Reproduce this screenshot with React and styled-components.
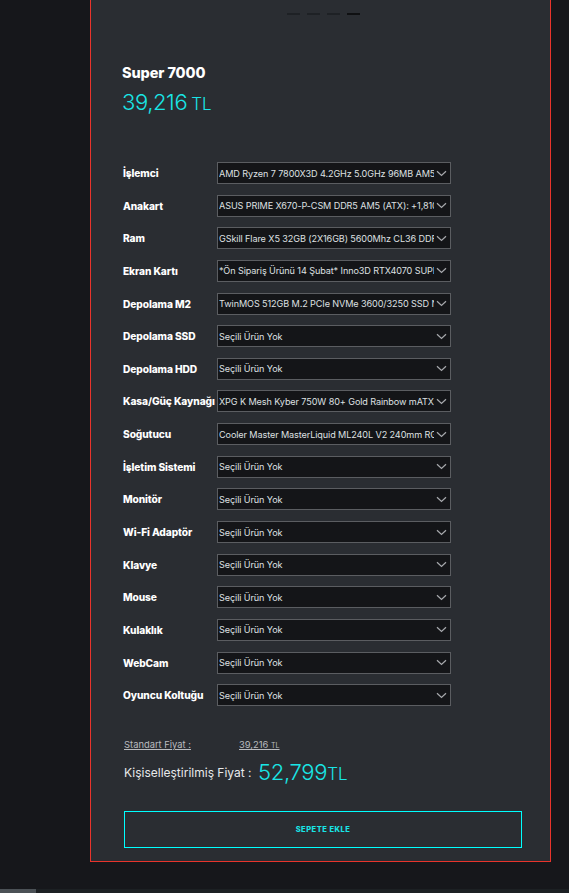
import React from 'react';
import styled, { createGlobalStyle } from 'styled-components';

const cyan = '#19e6e6';

const GlobalStyle = createGlobalStyle`
  html, body {
    margin: 0;
    padding: 0;
    background: #16171b;
  }
  body {
    font-family: Inter, 'Noto Sans', sans-serif;
    color: #fff;
  }
  * { box-sizing: border-box; }
`;

const Page = styled.div`
  width: 569px;
  height: 893px;
  overflow: hidden;
  display: flex;
  flex-direction: column;
`;

const Main = styled.div`
  padding-left: 90px;
  flex: 1;
`;

const Card = styled.div`
  width: 461px;
  background: #2a2d32;
  border: 1px solid #e8342c;
  border-top: 0;
  padding: 13px 28px 13px 31px;
`;

const Dots = styled.div`
  display: flex;
  justify-content: center;
  gap: 7px;
  margin-left: 3px;
`;

const Dot = styled.span`
  width: 13px;
  height: 2px;
  background: ${p => (p.$active ? '#0f1012' : '#1e2125')};
`;

const Title = styled.h2`
  margin: 48px 0 0;
  font-size: 14.5px;
  font-weight: 800;
  line-height: 20px;
  letter-spacing: -0.1px;
`;

const Price = styled.div`
  margin-top: 6px;
  color: ${cyan};
  font-size: 22px;
  font-weight: 300;
  line-height: 26px;
  letter-spacing: -0.4px;

  small {
    font-size: 17px;
    margin-left: 4px;
    letter-spacing: 0;
  }
`;

const Parts = styled.div`
  margin-top: 45px;
  display: grid;
  grid-template-columns: 95px 234px;
  row-gap: 10.65px;
`;

const Label = styled.div`
  font-size: 10.2px;
  font-weight: 800;
  line-height: 22px;
  white-space: nowrap;
  letter-spacing: -0.1px;
  margin-left: 1px;
`;

const SelectBox = styled.div`
  height: 22px;
  display: flex;
  align-items: center;
  background: #141518;
  border: 1px solid #5b5d61;
  padding: 0 3px 0 1px;
  gap: 2px;
`;

const SelectText = styled.span`
  flex: 1;
  overflow: hidden;
  white-space: nowrap;
  font-size: 9.1px;
  color: #dfe0e2;
  letter-spacing: -0.1px;
`;

const Chevron = () => (
  <svg width="11" height="7" viewBox="0 0 11 7" fill="none">
    <path d="M1 1.2 L5.5 5.5 L10 1.2" stroke="#a7a9ad" strokeWidth="1.2" />
  </svg>
);

const Totals = styled.div`
  margin-top: 33px;
  padding-left: 2px;
`;

const StandardRow = styled.div`
  display: flex;
  font-size: 9.4px;
  color: #b9bbbf;

  span {
    text-decoration: underline;
  }
  span:first-child {
    width: 115px;
  }
  small {
    font-size: 7px;
  }
`;

const CustomRow = styled.div`
  margin-top: 9px;
  display: flex;
  align-items: center;
  font-size: 12px;
  color: #e8e9ea;

  span:first-child {
    width: 134px;
  }
`;

const BigPrice = styled.span`
  color: ${cyan};
  font-size: 22px;
  font-weight: 300;
  letter-spacing: -0.3px;

  small {
    font-size: 17px;
    letter-spacing: 0;
  }
`;

const AddButton = styled.button`
  display: block;
  margin: 26px 0 0 2px;
  width: 398px;
  height: 37px;
  background: transparent;
  border: 1px solid #00ffff;
  color: ${cyan};
  font-family: Inter, sans-serif;
  font-size: 7.5px;
  font-weight: 800;
  letter-spacing: 0.5px;
  cursor: pointer;
`;

const Scrollbar = styled.div`
  height: 4px;
  background: #1c2023;
  display: flex;
`;

const Thumb = styled.div`
  width: 36px;
  background: #4b5156;
`;

const parts = [
  ['İşlemci', 'AMD Ryzen 7 7800X3D 4.2GHz 5.0GHz 96MB AM5 Soket İşlemci'],
  ['Anakart', 'ASUS PRIME X670-P-CSM DDR5 AM5 (ATX):  +1,810 TL'],
  ['Ram', 'GSkill Flare X5 32GB (2X16GB) 5600Mhz CL36 DDR5 Ram'],
  ['Ekran Kartı', '*Ön Sipariş Ürünü 14 Şubat* Inno3D RTX4070 SUPER'],
  ['Depolama M2', 'TwinMOS 512GB M.2 PCIe NVMe 3600/3250 SSD NVMe'],
  ['Depolama SSD', null],
  ['Depolama HDD', null],
  ['Kasa/Güç Kaynağı', 'XPG K Mesh Kyber 750W 80+ Gold Rainbow mATX/ATX'],
  ['Soğutucu', 'Cooler Master MasterLiquid ML240L V2 240mm RGB'],
  ['İşletim Sistemi', null],
  ['Monitör', null],
  ['Wi-Fi Adaptör', null],
  ['Klavye', null],
  ['Mouse', null],
  ['Kulaklık', null],
  ['WebCam', null],
  ['Oyuncu Koltuğu', null],
];

export default function App() {
  return (
    <Page>
      <GlobalStyle />
      <Main>
        <Card>
          <Dots>
            <Dot />
            <Dot />
            <Dot />
            <Dot $active />
          </Dots>
          <Title>Super 7000</Title>
          <Price>
            39,216<small>TL</small>
          </Price>
          <Parts>
            {parts.map(([label, value]) => (
              <React.Fragment key={label}>
                <Label>{label}</Label>
                <SelectBox>
                  <SelectText>{value || 'Seçili Ürün Yok'}</SelectText>
                  <Chevron />
                </SelectBox>
              </React.Fragment>
            ))}
          </Parts>
          <Totals>
            <StandardRow>
              <span>Standart Fiyat :</span>
              <span>
                39,216 <small>TL</small>
              </span>
            </StandardRow>
            <CustomRow>
              <span>Kişiselleştirilmiş Fiyat :</span>
              <BigPrice>
                52,799<small>TL</small>
              </BigPrice>
            </CustomRow>
          </Totals>
          <AddButton>SEPETE EKLE</AddButton>
        </Card>
      </Main>
      <Scrollbar>
        <Thumb />
      </Scrollbar>
    </Page>
  );
}
